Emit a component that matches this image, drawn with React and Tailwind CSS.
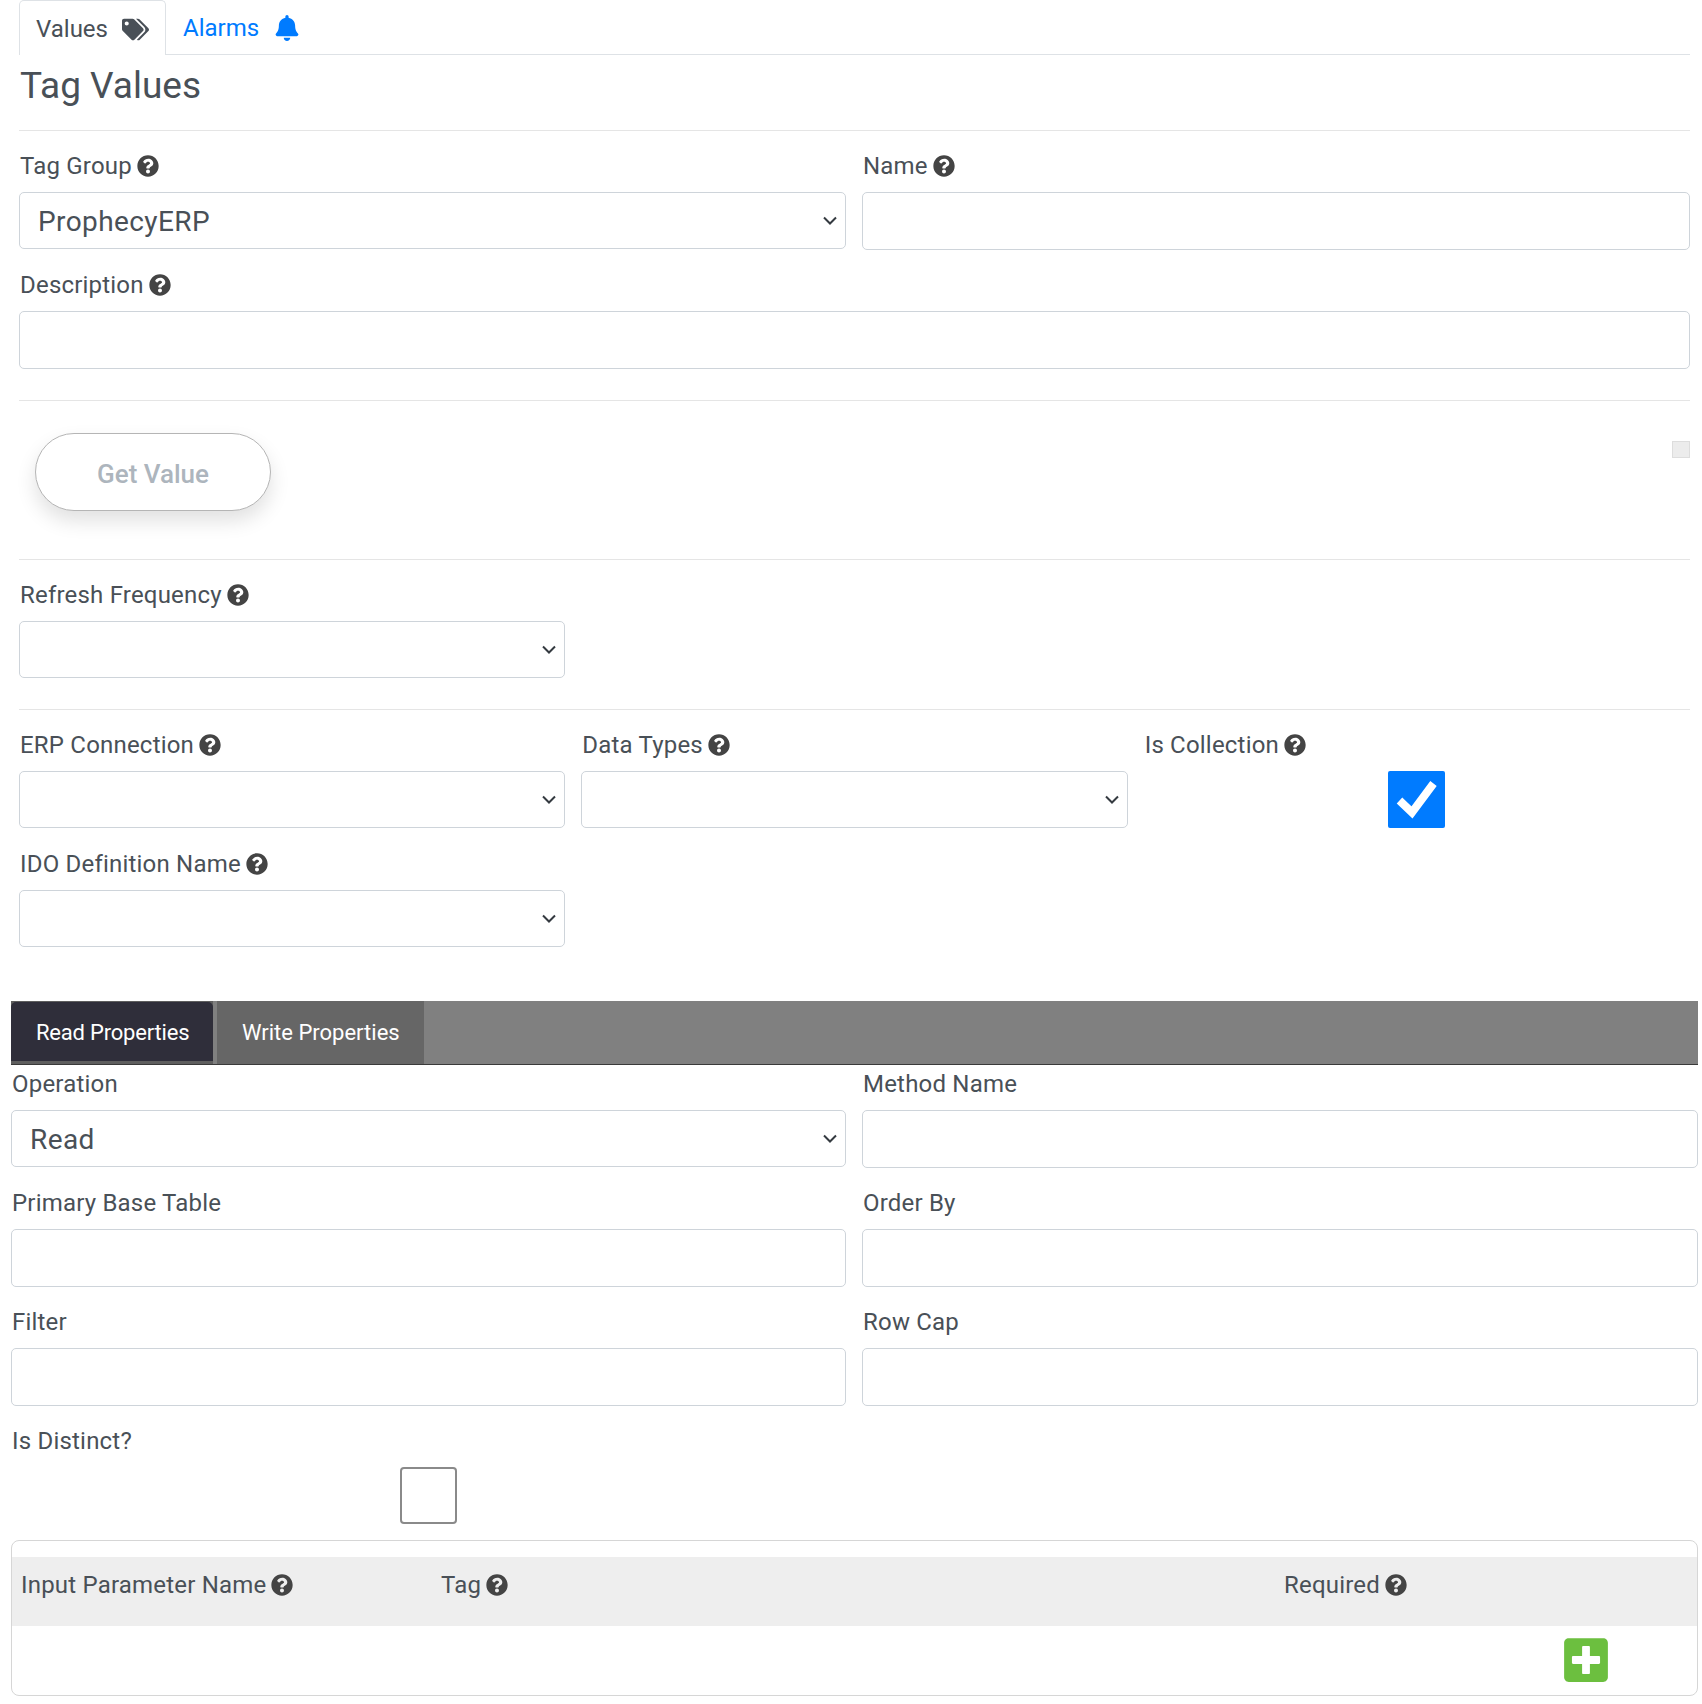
import { FaTags, FaBell, FaQuestionCircle, FaPlusSquare } from 'react-icons/fa';

const Help = () => <FaQuestionCircle className="ml-[5px] text-[22px] text-[#444444] shrink-0" />;

const Label = ({ text, help }) => (
  <div className="h-9 mb-2 pl-px flex items-center text-[24px] leading-none tracking-[0.2px] text-[#495057]">
    {text}
    {help && <Help />}
  </div>
);

const Input = () => (
  <input type="text" className="block w-full h-[58px] bg-white border border-[#ced4da] rounded-[5px] outline-none" />
);

const Select = ({ value }) => (
  <div className="relative h-[58px]">
    <select
      defaultValue={value}
      className="block w-full h-[57px] pl-[18px] pr-10 pt-[2px] bg-white border border-[#ced4da] rounded-[5px] appearance-none outline-none text-[28px] tracking-[0.4px] text-[#495057]"
    >
      <option value={value}>{value}</option>
    </select>
    <svg className="absolute right-[6px] top-[21px] w-[20px] h-[16px] pointer-events-none" viewBox="0 0 20 16" fill="none" stroke="#343a40" strokeWidth="2">
      <path d="M4 4.5l6 6 6-6" />
    </svg>
  </div>
);

const Field = ({ label, help, children }) => (
  <div className="mb-[17px]">
    <Label text={label} help={help} />
    {children}
  </div>
);

const CheckBox = ({ checked }) =>
  checked ? (
    <div className="mx-auto w-[57px] h-[57px] bg-[#007bff] rounded-[2px]">
      <svg className="w-full h-full" viewBox="0 0 57 57" fill="none" stroke="#ffffff" strokeWidth="8">
        <path d="M11.5 29.5L24 41.5L45.5 12.5" />
      </svg>
    </div>
  ) : (
    <div className="mx-auto w-[57px] h-[57px] bg-white border-2 border-[#8a8a8a] rounded-[4px]" />
  );

const Divider = () => <hr className="border-0 h-px bg-[#e5e5e5]" />;

export default function App() {
  return (
    <div className="w-[1702px] h-[1704px] bg-white overflow-hidden font-['Roboto',sans-serif] text-[#495057]">
      {/* Top tabs */}
      <div className="ml-[19px] mr-[12px]">
        <div className="h-[55px] flex border-b border-[#dee2e6] text-[24px]">
          <div className="w-[147px] h-[55px] pl-[16px] pt-[2px] flex items-center bg-white border border-[#dee2e6] border-b-0 rounded-t-[5px]">
            Values
            <FaTags className="ml-[14px] text-[27px] text-[#495057]" />
          </div>
          <div className="pl-[17px] pt-[2px] flex items-center text-[#007bff]">
            Alarms
            <FaBell className="ml-[15px] text-[26px]" />
          </div>
        </div>

        <div className="h-[75px] pl-px flex items-center pb-[13px] text-[37px] text-[#495057]">Tag Values</div>
        <Divider />

        <div className="pt-[17px] grid grid-cols-[827px_1fr] gap-x-4">
          <Field label="Tag Group" help>
            <Select value="ProphecyERP" />
          </Field>
          <Field label="Name" help>
            <Input />
          </Field>
        </div>
        <Field label="Description" help>
          <Input />
        </Field>

        <div className="mt-[31px]">
          <Divider />
        </div>

        <div className="pt-8 pb-[48px] pl-4 flex items-start justify-between">
          <button className="w-[236px] h-[78px] pt-[5px] bg-white border border-[#b5b5b5] rounded-full shadow-[0_10px_20px_rgba(0,0,0,0.12)] text-[26px] font-medium text-[#adb5bd]">
            Get Value
          </button>
          <div className="mt-2 w-[18px] h-[17px] bg-[#ececec] border border-[#dddddd]" />
        </div>
        <Divider />

        <div className="pt-[17px] grid grid-cols-3 gap-x-4">
          <Field label="Refresh Frequency" help>
            <Select value="" />
          </Field>
        </div>

        <div className="mt-[13px]">
          <Divider />
        </div>

        <div className="pt-[17px] grid grid-cols-3 gap-x-4">
          <Field label="ERP Connection" help>
            <Select value="" />
          </Field>
          <Field label="Data Types" help>
            <Select value="" />
          </Field>
          <Field label="Is Collection" help>
            <CheckBox checked />
          </Field>
          <Field label="IDO Definition Name" help>
            <Select value="" />
          </Field>
        </div>
      </div>

      {/* Read / write tabs */}
      <div className="ml-[11px] mr-[4px] mt-[36px]">
        <div className="h-[64px] flex bg-[#808080] border-b border-[#3a3a3a] text-[22px] text-white">
          <div className="w-[202px] pt-px pb-[3px] bg-[#5e5e5e]">
            <div className="h-full pl-[25px] pt-[2px] flex items-center tracking-[-0.2px] bg-[#2f2e3a] rounded-t-[5px]">Read Properties</div>
          </div>
          <div className="w-[207px] ml-1 pl-[25px] flex items-center bg-[#666666]">Write Properties</div>
        </div>

        <div className="pt-px grid grid-cols-[835px_1fr] gap-x-4">
          <Field label="Operation">
            <Select value="Read" />
          </Field>
          <Field label="Method Name">
            <Input />
          </Field>
          <Field label="Primary Base Table">
            <Input />
          </Field>
          <Field label="Order By">
            <Input />
          </Field>
          <Field label="Filter">
            <Input />
          </Field>
          <Field label="Row Cap">
            <Input />
          </Field>
          <div className="mb-4">
            <Label text="Is Distinct?" />
            <CheckBox />
          </div>
        </div>

        {/* Input parameters */}
        <div className="h-[156px] pt-4 border border-[#d6d6d6] rounded-[8px]">
          <div className="h-[69px] pb-[14px] pl-[9px] flex items-center bg-[#eeeeee] text-[24px] tracking-[0.2px] text-[#495057]">
            <div className="w-[420px] flex items-center">Input Parameter Name<Help /></div>
            <div className="w-[843px] flex items-center">Tag<Help /></div>
            <div className="flex items-center">Required<Help /></div>
          </div>
          <div className="pt-[9px] pl-[1549px]">
            <FaPlusSquare className="text-[50px] text-[#6cbf3f]" />
          </div>
        </div>
      </div>
    </div>
  );
}
